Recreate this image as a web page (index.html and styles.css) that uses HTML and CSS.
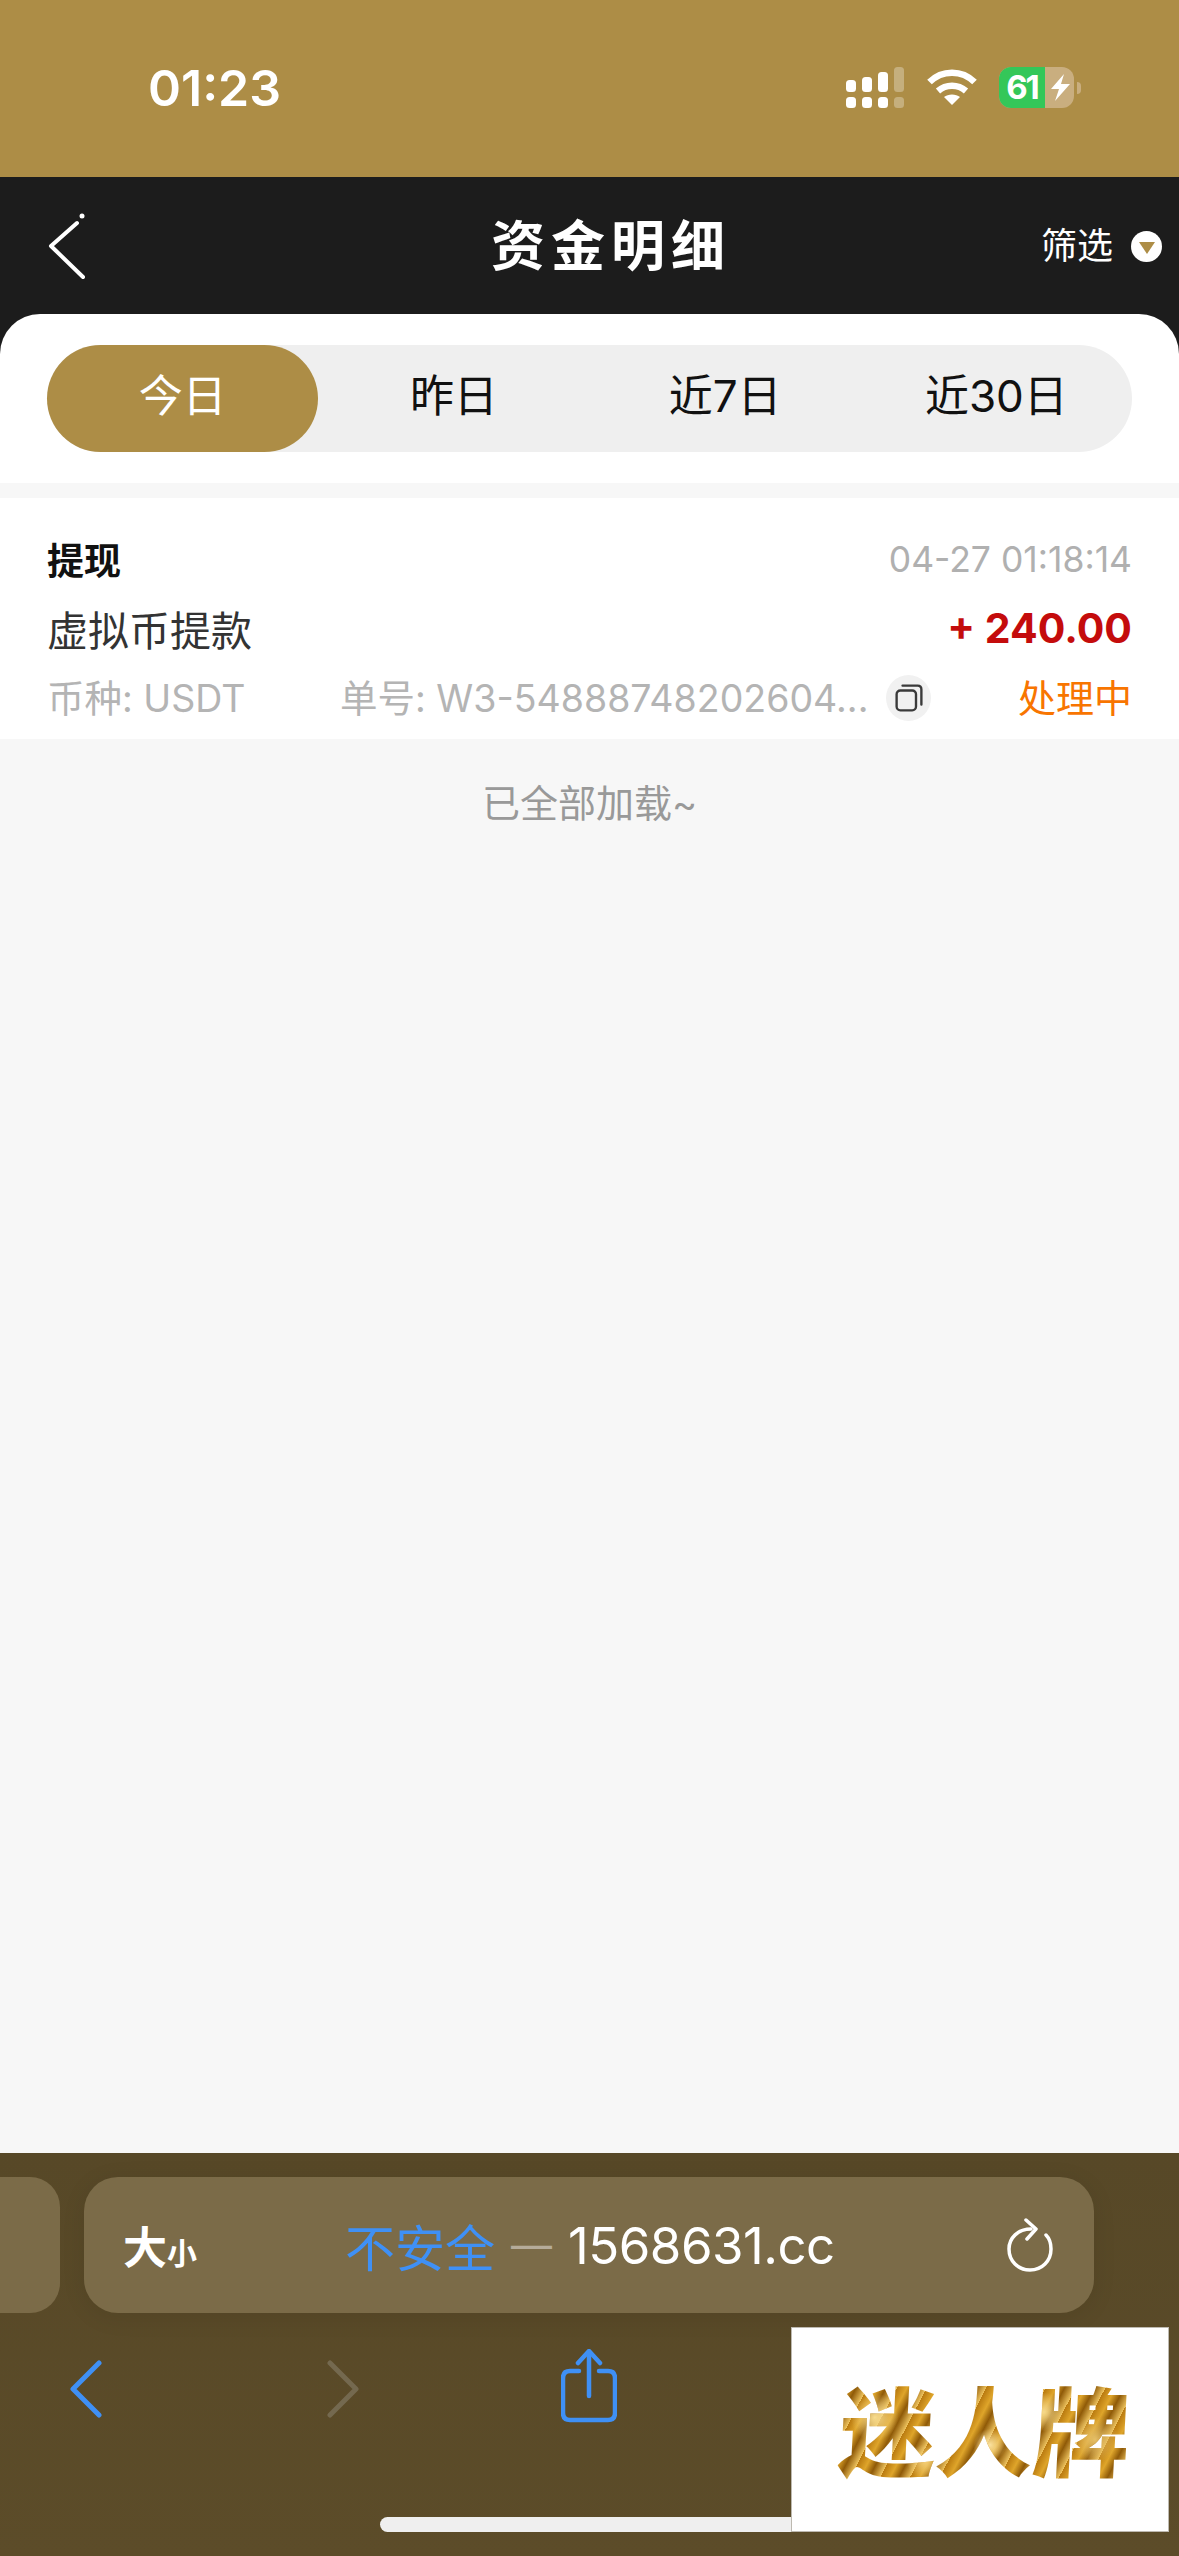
FILE: index.html
```html
<!DOCTYPE html>
<html lang="zh-CN">
<head>
    <meta charset="UTF-8">
    <meta name="viewport" content="width=device-width, initial-scale=1.0">
    <title>资金明细</title>
    <link rel="stylesheet" href="styles.css">
</head>
<body>

<!-- Status bar -->
<div class="status-bar">
    <span class="time">01:23</span>
    <div class="status-icons">
        <svg class="signal" width="58" height="41" viewBox="0 0 58 41" fill="#fff">
            <rect x="0" y="13" width="10" height="12" rx="3.5"/>
            <rect x="16" y="10" width="10" height="15" rx="3.5"/>
            <rect x="32" y="5" width="10" height="20" rx="3.5"/>
            <rect x="48" y="0" width="10" height="25" rx="3.5" opacity="0.3"/>
            <rect x="0" y="30" width="10" height="11" rx="3.5"/>
            <rect x="16" y="30" width="10" height="11" rx="3.5"/>
            <rect x="32" y="30" width="10" height="11" rx="3.5"/>
            <rect x="48" y="30" width="10" height="11" rx="3.5" opacity="0.3"/>
        </svg>
        <svg class="wifi" width="50" height="36" viewBox="0 0 50 36" fill="none" stroke="#fff" stroke-width="6.5">
            <path d="M2.5 13 C15 0.5 35 0.5 47.5 13"/>
            <path d="M11 22 C19 15 31 15 39 22"/>
            <path d="M17 28 C21 24.5 29 24.5 33 28 L25 36 Z" fill="#fff" stroke="none"/>
        </svg>
        <div class="battery">
            <div class="battery-body">
                <div class="battery-level">61</div>
                <svg class="bolt" width="20" height="27" viewBox="0 0 20 27" fill="#fff">
                    <path d="M13 0 L0 15 L8 15 L4 27 L19 10 L10 10 Z"/>
                </svg>
            </div>
            <div class="battery-nub"></div>
        </div>
    </div>
</div>

<!-- Header -->
<div class="header">
    <svg class="back" width="40" height="68" viewBox="0 0 40 68" fill="none" stroke="#fff" stroke-width="4" stroke-linecap="round" stroke-linejoin="round">
        <path d="M30 11 L4 34 L36 65"/>
        <circle cx="35" cy="4" r="2.5" fill="#fff" stroke="none"/>
    </svg>
    <h1 class="title">资金明细</h1>
    <div class="filter">
        <span>筛选</span>
        <span class="filter-dot"><span class="filter-arrow"></span></span>
    </div>
</div>

<div class="content">
    <!-- Tabs -->
    <div class="tabs-wrap">
        <div class="tabs">
            <div class="tab active">今日</div>
            <div class="tab">昨日</div>
            <div class="tab">近7日</div>
            <div class="tab">近30日</div>
        </div>
    </div>

    <!-- Record -->
    <div class="record">
        <div class="record-row row-top">
            <span class="record-type">提现</span>
            <span class="record-date">04-27 01:18:14</span>
        </div>
        <div class="record-row row-mid">
            <span class="record-name">虚拟币提款</span>
            <span class="record-amount">+ 240.00</span>
        </div>
        <div class="record-row row-bottom">
            <span class="record-coin">币种: USDT</span>
            <span class="record-no">单号: W3-54888748202604...</span>
            <span class="copy">
                <svg width="28" height="28" viewBox="0 0 26 26" fill="none" stroke="#3a3a3a" stroke-width="2.2" stroke-linecap="round">
                    <rect x="1.5" y="6" width="18" height="18.5" rx="3.5"/>
                    <path d="M7 1.5 H21 Q24.5 1.5 24.5 5 V19"/>
                </svg>
            </span>
            <span class="record-status">处理中</span>
        </div>
    </div>

    <p class="all-loaded">已全部加载~</p>
</div>

<!-- Browser toolbar -->
<div class="browser-bar">
    <div class="url-row">
        <div class="url-stub"></div>
        <div class="url-box">
            <span class="text-size">大<small>小</small></span>
            <div class="url-text">
                <span class="not-secure">不安全</span>
                <span class="dash">—</span>
                <span class="domain">1568631.cc</span>
            </div>
            <svg class="reload" width="46" height="54" viewBox="0 0 46 54" fill="none" stroke="#fff" stroke-width="3.5" stroke-linecap="round" stroke-linejoin="round">
                <path d="M24 11 C11 11 2 20 2 31 C2 43 11 52 23 52 C35 52 44 43 44 31 C44 25 42 20 39 17"/>
                <path d="M19 2 L29 11 L20 21"/>
            </svg>
        </div>
    </div>
    <div class="nav-row">
        <svg class="nav-back" width="34" height="58" viewBox="0 0 34 58" fill="none" stroke="#3f90f5" stroke-width="5" stroke-linecap="round" stroke-linejoin="round">
            <path d="M30 3 L4 29 L30 55"/>
        </svg>
        <svg class="nav-forward" width="34" height="58" viewBox="0 0 34 58" fill="none" stroke="#74694f" stroke-width="5" stroke-linecap="round" stroke-linejoin="round">
            <path d="M4 3 L30 29 L4 55"/>
        </svg>
        <svg class="nav-share" width="56" height="74" viewBox="0 0 56 74" fill="none" stroke="#3f90f5" stroke-width="4.5" stroke-linecap="round" stroke-linejoin="round">
            <path d="M18 22 H9 Q2 22 2 29 V64 Q2 71 9 71 H47 Q54 71 54 64 V29 Q54 22 47 22 H38"/>
            <path d="M28 47 V3"/>
            <path d="M17 14 L28 2 L39 14"/>
        </svg>
    </div>
    <div class="home-indicator"></div>
    <!-- Ad picture sits over the toolbar -->
    <div class="ad-box">
        <span class="ad-text">迷人牌</span>
    </div>
</div>

</body>
</html>
```

FILE: styles.css
```css
* {
    box-sizing: border-box;
}
body {
    font-family: Inter, "Noto Sans CJK SC", sans-serif;
    background-color: #f7f7f7;
    margin: 0;
    width: 1179px;
    height: 2556px;
    display: flex;
    flex-direction: column;
    overflow: hidden;
}

/* Status bar */
.status-bar {
    height: 177px;
    background-color: #ad8d46;
    display: flex;
    justify-content: space-between;
    padding: 59px 98px 0 148px;
    color: white;
    flex: none;
}
.time {
    font-size: 50px;
    font-weight: 600;
    line-height: 58px;
}
.status-icons {
    display: flex;
    align-items: flex-start;
    padding-top: 8px;
}
.signal {
    margin-right: 23px;
}
.wifi {
    margin-top: 2px;
    margin-right: 22px;
}
.battery {
    display: flex;
    align-items: center;
}
.battery-body {
    width: 75px;
    height: 41px;
    border-radius: 12px;
    background-color: #c9ae7f;
    overflow: hidden;
    display: flex;
    align-items: center;
}
.battery-level {
    width: 46px;
    height: 41px;
    background-color: #34c759;
    font-size: 33px;
    font-weight: 700;
    line-height: 41px;
    text-align: center;
    letter-spacing: -2px;
}
.bolt {
    margin-left: 6px;
}
.battery-nub {
    width: 4px;
    height: 12px;
    margin-left: 3px;
    background-color: #c9ae7f;
    border-radius: 0 6px 6px 0;
}

/* Header */
.header {
    height: 137px;
    background-color: #1c1c1c;
    display: flex;
    align-items: flex-start;
    padding: 0 17px 0 47px;
    color: white;
    flex: none;
}
.back {
    margin-top: 35px;
    margin-right: 404px;
}
.title {
    margin: 32px 0 0;
    font-size: 54px;
    font-weight: 700;
    letter-spacing: 6px;
    line-height: 76px;
    white-space: nowrap;
}
.filter {
    display: flex;
    align-items: center;
    margin-left: auto;
    margin-top: 44px;
    font-size: 36px;
    line-height: 50px;
    gap: 18px;
}
.filter-dot {
    width: 31px;
    height: 31px;
    border-radius: 50%;
    background-color: white;
    display: flex;
    align-items: center;
    justify-content: center;
}
.filter-arrow {
    width: 0;
    height: 0;
    margin-top: 3px;
    border-left: 8px solid transparent;
    border-right: 8px solid transparent;
    border-top: 12px solid #ad8d46;
}

/* Page content, dark strip shows behind the rounded sheet corners */
.content {
    flex: 1;
    background: linear-gradient(#1c1c1c 40px, #f7f7f7 40px);
}
.tabs-wrap {
    height: 169px;
    background-color: white;
    border-radius: 40px 40px 0 0;
    padding: 31px 47px 0;
}
.tabs {
    height: 107px;
    background-color: #efefef;
    border-radius: 54px;
    display: grid;
    grid-template-columns: repeat(4, 1fr);
}
.tab {
    font-size: 44px;
    line-height: 102px;
    text-align: center;
    color: #111;
    border-radius: 54px;
}
.tab.active {
    background-color: #ad8d46;
    color: white;
}

/* Record card */
.record {
    margin-top: 15px;
    height: 241px;
    background-color: white;
    padding: 36px 47px 0;
}
.record-row {
    display: flex;
    align-items: center;
    justify-content: space-between;
}
.row-top {
    height: 50px;
}
.row-mid {
    height: 50px;
    margin-top: 19px;
}
.row-bottom {
    height: 46px;
    margin-top: 19px;
    justify-content: flex-start;
}
.record-type {
    font-size: 37px;
    font-weight: 700;
    color: #111;
}
.record-date {
    font-size: 35.5px;
    color: #b0b0b0;
}
.record-name {
    font-size: 41px;
    color: #333;
}
.record-amount {
    font-size: 41px;
    font-weight: 700;
    color: #c40c0c;
}
.record-coin,
.record-no {
    font-size: 37.5px;
    color: #b4b4b4;
    white-space: nowrap;
}
.record-coin {
    width: 293px;
}
.copy {
    width: 45px;
    height: 46px;
    margin-left: 18px;
    margin-top: 5px;
    border-radius: 50%;
    background-color: #f1f1f1;
    display: flex;
    align-items: center;
    justify-content: center;
}
.record-status {
    margin-left: auto;
    font-size: 38px;
    color: #f87500;
}
.all-loaded {
    margin: 36px 0 0;
    font-size: 38px;
    line-height: 56px;
    text-align: center;
    color: #999;
}

/* Browser toolbar */
.browser-bar {
    position: relative;
    height: 403px;
    flex: none;
    background: linear-gradient(#574827, #5c4c29);
}
.url-row {
    display: flex;
    gap: 24px;
    padding-top: 24px;
}
.url-stub {
    width: 60px;
    height: 136px;
    background-color: #7b6b48;
    border-radius: 0 30px 30px 0;
}
.url-box {
    width: 1010px;
    height: 136px;
    background-color: #7b6b48;
    border-radius: 34px;
    box-shadow: 0 4px 24px rgba(0, 0, 0, 0.08);
    display: flex;
    align-items: center;
    padding: 0 41px 0 39px;
    color: white;
}
.text-size {
    width: 222px;
    font-size: 44px;
    font-weight: 700;
    white-space: nowrap;
}
.text-size small {
    font-size: 30px;
}
.url-text {
    display: flex;
    align-items: center;
    flex: 1;
    gap: 16px;
    white-space: nowrap;
}
.not-secure {
    font-size: 50px;
    color: #3f90f5;
}
.dash {
    font-size: 41px;
    color: #b5ab99;
}
.domain {
    font-size: 51px;
    letter-spacing: -0.5px;
}
.nav-row {
    display: flex;
    align-items: flex-start;
    padding: 36px 0 0 69px;
}
.nav-back {
    margin-top: 11px;
    margin-right: 223px;
}
.nav-forward {
    margin-top: 11px;
    margin-right: 201px;
}
.home-indicator {
    position: absolute;
    left: 380px;
    top: 364px;
    width: 440px;
    height: 15px;
    background-color: #efefef;
    border-radius: 8px;
}
.ad-box {
    position: absolute;
    left: 791px;
    top: 174px;
    width: 378px;
    height: 205px;
    background-color: white;
    border: 1px solid #bdb9b0;
    display: flex;
    align-items: center;
    justify-content: center;
}
.ad-text {
    font-size: 97px;
    font-weight: 900;
    line-height: 110px;
    transform: skewX(-3deg);
    background-image:
        radial-gradient(circle at 12% 35%, #f8dc8e 0, transparent 9%),
        radial-gradient(circle at 30% 75%, #f3cf78 0, transparent 8%),
        radial-gradient(circle at 52% 60%, #fbe3a0 0, transparent 10%),
        radial-gradient(circle at 70% 30%, #f6d98a 0, transparent 9%),
        radial-gradient(circle at 88% 55%, #e6c068 0, transparent 9%),
        repeating-linear-gradient(115deg, #b97a10 0, #dfa52a 9px, #8f5a08 17px, #eec35e 27px);
    -webkit-background-clip: text;
    background-clip: text;
    color: transparent;
    margin-top: 8px;
    margin-left: 8px;
}
```
